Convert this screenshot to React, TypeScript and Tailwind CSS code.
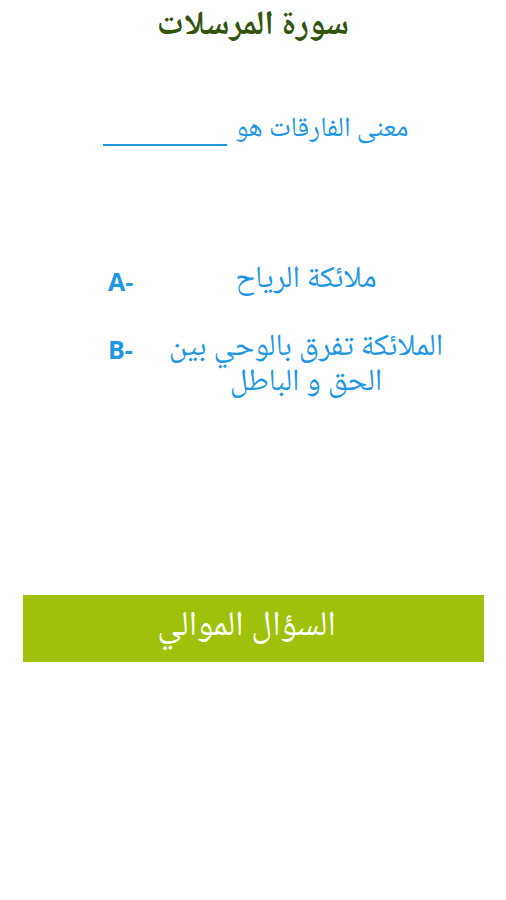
import React from "react";

const ar = { fontFamily: '"Noto Naskh Arabic", "Noto Sans Arabic", "DejaVu Sans", sans-serif' };
const lat = { fontFamily: '"Open Sans", "Noto Sans", sans-serif' };

export default function App() {
  return (
    <div className="w-[506px] h-[900px] bg-white relative" style={ar}>
      <div className="text-center text-[34px] font-bold text-[#34530f] leading-[54px]" dir="rtl">
        سورة المرسلات
      </div>
      <div className="mt-[56px] flex justify-center items-end text-[28px] text-[#2196e3] leading-[40px] pl-[6px]" dir="rtl">
        <span>معنى الفارقات هو</span>
        <span className="mr-[8px] inline-block w-[124px] border-b-2 border-[#2196e3] mb-[4px]"></span>
      </div>
      <div className="mt-[113px] flex flex-col gap-[32px] pl-[108px]">
        <div className="flex items-start">
          <div className="w-[44px] text-[25px] font-bold text-[#2196e3] leading-[36px]" style={lat}>A-</div>
          <div className="w-[308px] text-center text-[31px] text-[#2196e3] leading-[36px]" dir="rtl">ملائكة الرياح</div>
        </div>
        <div className="flex items-start">
          <div className="w-[44px] text-[25px] font-bold text-[#2196e3] leading-[36px]" style={lat}>B-</div>
          <div className="w-[308px] text-center text-[31px] text-[#2196e3] leading-[35px]" dir="rtl">الملائكة تفرق بالوحي بين الحق و الباطل</div>
        </div>
      </div>
      <div className="absolute left-[23px] top-[595px] w-[461px] h-[67px] bg-[#9fc10b] flex items-center justify-center text-white text-[35px] pr-[14px]" dir="rtl">
        السؤال الموالي
      </div>
    </div>
  );
}
